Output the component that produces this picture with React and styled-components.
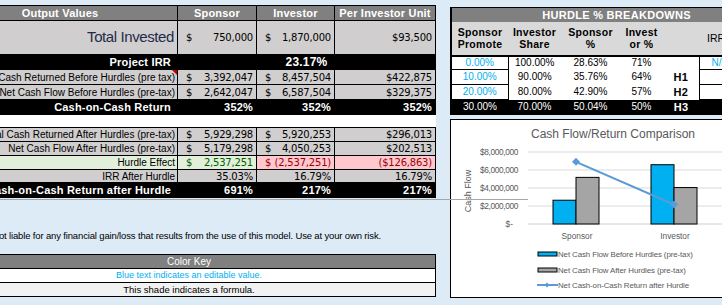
import React from 'react';
import styled, {createGlobalStyle} from 'styled-components';

const GlobalStyle = createGlobalStyle`
  html, body {
    margin: 0;
    padding: 0;
    background: #ddebf7;
    overflow: hidden;
  }
  body {
    width: 722px;
    height: 305px;
    font-family: "Liberation Sans", Arial, sans-serif;
  }
`

const tones = {
    head: {bg: '#808080', fg: '#fff'},
    gray: {bg: '#d0cece', fg: '#000'},
    black: {bg: '#000', fg: '#fff'},
    white: {bg: '#fff', fg: '#000'},
    green: {bg: '#e2efda', fg: '#006100'},
    pink: {bg: '#ffc7ce', fg: '#9c0006'},
    shade: {bg: '#f2f2f2', fg: '#000'},
    sub: {bg: '#d9d9d9', fg: '#000'},
}

const Page = styled.div`
    position: relative;
    display: grid;
    grid-template-columns: 493px 320px;
    column-gap: 15px;
    margin-left: -58px;
    padding-top: 5px;
    height: 300px;
`
const LeftCol = styled.div`
    display: flex;
    flex-direction: column;
`
const RightCol = styled.div`
    display: flex;
    flex-direction: column;
    padding-top: 2px;
`

const Sheet = styled.table`
    border-collapse: collapse;
    table-layout: fixed;
    width: ${p => p.$w}px;
    font-size: 10px;
`
const Col = styled.col`
    width: ${p => p.$w}px;
`
const Row = styled.tr`
    height: ${p => p.$h}px;
`
const Cell = styled.td`
    position: relative;
    padding: 0 ${p => p.$pr ?? 3}px 0 ${p => p.$pl ?? 3}px;
    line-height: 11px;
    text-align: ${p => p.$align || 'right'};
    white-space: nowrap;
    overflow: hidden;
    border: ${p => p.$open ? 'none' : '1px solid #000'};
    background: ${p => tones[p.$tone || 'gray'].bg};
    color: ${p => p.$ink || tones[p.$tone || 'gray'].fg};
    font-weight: ${p => p.$bold ? 700 : 400};
    font-size: ${p => p.$size || 10}px;
    letter-spacing: ${p => p.$bold ? '0.2px' : '0'};
`
const BigLabel = styled.span`
    font-size: 15px;
    letter-spacing: -0.4px;
    color: #1f2b4a;
`
const Money = styled.div`
    display: flex;
    justify-content: space-between;
    padding-left: 5px;
    font-family: "DejaVu Sans", sans-serif;
    font-size: 10px;
    letter-spacing: -0.2px;
`
const Num = styled.span`
    font-family: "DejaVu Sans", sans-serif;
    font-size: 10px;
    letter-spacing: -0.2px;
`
const CommentMark = styled.span`
    position: absolute;
    top: 0;
    right: 0;
    width: 0;
    height: 0;
    border-top: 5px solid #c00000;
    border-left: 5px solid transparent;
`

const Disclaimer = styled.div`
    margin-top: 31px;
    width: 439px;
    display: flex;
    justify-content: flex-end;
    white-space: nowrap;
    font-size: 9.5px;
    line-height: 14px;
    color: #000;
    letter-spacing: -0.15px;
`
const KeyTable = styled(Sheet)`
    margin-top: 11px;
    font-size: 9px;
`

const Hurdle = styled.table`
    border-collapse: collapse;
    table-layout: fixed;
    width: 330px;
    font-size: 10px;
    border-left: 2px solid #000;
`
const HCell = styled.td`
    padding: 0;
    line-height: 12px;
    text-align: ${p => p.$align || 'center'};
    padding-left: ${p => p.$pl || 0}px;
    white-space: nowrap;
    overflow: hidden;
    background: ${p => tones[p.$tone || 'white'].bg};
    color: ${p => p.$blue ? '#00b0f0' : tones[p.$tone || 'white'].fg};
    font-weight: ${p => p.$bold ? 700 : 400};
    font-size: ${p => p.$size || 10}px;
    border: ${p => p.$boxed ? '1px solid #000' : 'none'};
    border-bottom: ${p => p.$thick ? '2px solid #000' : p.$boxed ? '1px solid #000' : 'none'};
    border-top: ${p => p.$top ? '1px solid #000' : p.$boxed ? '1px solid #000' : 'none'};
    letter-spacing: ${p => p.$bold ? '0.3px' : '0'};
`

const ChartBox = styled.div`
    margin-top: 4px;
    height: 177px;
    background: #fff;
    border: 1px solid #000;
    border-right: none;
    overflow: hidden;
`
const HurdleLine = styled.div`
    position: absolute;
    left: 0;
    top: 199px;
    width: 586px;
    height: 1px;
    background: #a6a6a6;
    z-index: 2;
`

const bars = [
    {name: 'Sponsor', before: 2642047, after: 5179298, coc: 691, x: 103},
    {name: 'Investor', before: 6587504, after: 4050253, coc: 217, x: 201},
]
const base = 105
const perMillion = 9
const barH = v => (v / 1e6) * perMillion
const cocY = v => base - (v / 800) * 72
const font = 'Liberation Sans, sans-serif'

function Chart() {
    const ticks = [8, 6, 4, 2]
    const pts = bars.map(b => [b.x + 23, cocY(b.coc)])
    const diamond = (x, y, r) => `${x},${y - r} ${x + r},${y} ${x},${y + r} ${x - r},${y}`
    return (
        <svg width="320" height="177" viewBox="1 1 320 177">
            <text x="163" y="19" textAnchor="middle" fontSize="12" fill="#595959" fontFamily={font}>
                Cash Flow/Return Comparison
            </text>
            {ticks.map(t => (
                <g key={t}>
                    <line x1="78" x2="320" y1={base - t * perMillion} y2={base - t * perMillion} stroke="#d9d9d9"/>
                    <text x="68" y={base - t * perMillion + 3} textAnchor="end" fontSize="8.3" letterSpacing="-0.35"
                          fill="#595959" fontFamily={font}>${t},000,000</text>
                </g>
            ))}
            <line x1="78" x2="320" y1={base} y2={base} stroke="#d0d0d0"/>
            <text x="63" y={base + 3} textAnchor="end" fontSize="8.3" fill="#595959" fontFamily={font}>$-</text>
            <text transform="translate(21 72) rotate(-90)" textAnchor="middle" fontSize="9" fill="#595959"
                  fontFamily={font}>Cash Flow</text>
            {bars.map(b => (
                <g key={b.name}>
                    <rect x={b.x} y={base - barH(b.before)} width="23" height={barH(b.before)}
                          fill="#00b0f0" stroke="#000" strokeWidth="1"/>
                    <rect x={b.x + 23} y={base - barH(b.after)} width="23" height={barH(b.after)}
                          fill="#a5a5a5" stroke="#000" strokeWidth="1"/>
                    <text x={b.x + 24} y="120" textAnchor="middle" fontSize="8.3" fill="#595959"
                          fontFamily={font}>{b.name}</text>
                </g>
            ))}
            <polyline points={pts.map(p => p.join(',')).join(' ')} fill="none" stroke="#5b9bd5" strokeWidth="2"/>
            {pts.map(([x, y]) => <polygon key={x} points={diamond(x, y, 4)} fill="#5b9bd5"/>)}

            <rect x="88" y="133" width="19" height="4" fill="#00b0f0" stroke="#000"/>
            <text x="108" y="138" fontSize="7.9" letterSpacing="-0.1" fill="#595959" fontFamily={font}>Net Cash Flow Before Hurdles (pre-tax)</text>
            <rect x="88" y="149" width="19" height="4" fill="#a5a5a5" stroke="#000"/>
            <text x="108" y="154" fontSize="7.9" letterSpacing="-0.1" fill="#595959" fontFamily={font}>Net Cash Flow After Hurdles (pre-tax)</text>
            <line x1="87" x2="108" y1="166" y2="166" stroke="#5b9bd5" strokeWidth="2"/>
            <polygon points={diamond(97, 166, 2.5)} fill="#5b9bd5"/>
            <text x="108" y="169" fontSize="7.9" letterSpacing="-0.1" fill="#595959" fontFamily={font}>Net Cash-on-Cash Return after Hurdle</text>
        </svg>
    )
}

function M({v}) {
    return <Money><span>$</span><span>{v}</span></Money>
}

export default function App() {
    return (
        <>
            <GlobalStyle/>
            <Page>
                <LeftCol>
                    <Sheet $w={493}>
                        <colgroup>
                            <Col $w={235}/><Col $w={79}/><Col $w={78}/><Col $w={101}/>
                        </colgroup>
                        <tbody>
                        <Row $h={15}>
                            <Cell $tone="head" $bold $size={11} $align="center">Output Values</Cell>
                            <Cell $tone="head" $bold $size={11} $align="center">Sponsor</Cell>
                            <Cell $tone="head" $bold $size={11} $align="center">Investor</Cell>
                            <Cell $tone="head" $bold $size={11} $align="center">Per Investor Unit</Cell>
                        </Row>
                        <Row $h={34}>
                            <Cell $pr={3}><BigLabel>Total Invested</BigLabel></Cell>
                            <Cell><M v="750,000"/></Cell>
                            <Cell><M v="1,870,000"/></Cell>
                            <Cell><Num>$93,500</Num></Cell>
                        </Row>
                        <Row $h={15}>
                            <Cell $tone="black" $bold $size={11} $pr={6}>Project IRR</Cell>
                            <Cell $tone="black" $bold $size={12} $align="center" colSpan={3}>23.17%</Cell>
                        </Row>
                        <Row $h={15}>
                            <Cell $pr={2}>Total Cash Returned Before Hurdles (pre tax)<CommentMark/></Cell>
                            <Cell><M v="3,392,047"/></Cell>
                            <Cell><M v="8,457,504"/></Cell>
                            <Cell><Num>$422,875</Num></Cell>
                        </Row>
                        <Row $h={15}>
                            <Cell $pr={2}>Net Cash Flow Before Hurdles (pre-tax)</Cell>
                            <Cell><M v="2,642,047"/></Cell>
                            <Cell><M v="6,587,504"/></Cell>
                            <Cell><Num>$329,375</Num></Cell>
                        </Row>
                        <Row $h={15}>
                            <Cell $tone="black" $bold $size={11} $pr={6}>Cash-on-Cash Return</Cell>
                            <Cell $tone="black" $bold $size={11}>352%</Cell>
                            <Cell $tone="black" $bold $size={11}>352%</Cell>
                            <Cell $tone="black" $bold $size={11}>352%</Cell>
                        </Row>
                        <Row $h={13}>
                            <Cell $tone="white" $open colSpan={4}/>
                        </Row>
                        <Row $h={14}>
                            <Cell $pr={2}>Total Cash Returned After Hurdles (pre-tax)</Cell>
                            <Cell><M v="5,929,298"/></Cell>
                            <Cell><M v="5,920,253"/></Cell>
                            <Cell><Num>$296,013</Num></Cell>
                        </Row>
                        <Row $h={14}>
                            <Cell $pr={2}>Net Cash Flow After Hurdles (pre-tax)</Cell>
                            <Cell><M v="5,179,298"/></Cell>
                            <Cell><M v="4,050,253"/></Cell>
                            <Cell><Num>$202,513</Num></Cell>
                        </Row>
                        <Row $h={14}>
                            <Cell $tone="green" $ink="#000" $pr={2}>Hurdle Effect</Cell>
                            <Cell $tone="green"><M v="2,537,251"/></Cell>
                            <Cell $tone="pink"><M v="(2,537,251)"/></Cell>
                            <Cell $tone="pink"><Num>($126,863)</Num></Cell>
                        </Row>
                        <Row $h={13}>
                            <Cell $pr={2}>IRR After Hurdle</Cell>
                            <Cell><Num>35.03%</Num></Cell>
                            <Cell><Num>16.79%</Num></Cell>
                            <Cell><Num>16.79%</Num></Cell>
                        </Row>
                        <Row $h={15}>
                            <Cell $tone="black" $bold $size={11} $pr={6}>Net Cash-on-Cash Return after Hurdle</Cell>
                            <Cell $tone="black" $bold $size={11}>691%</Cell>
                            <Cell $tone="black" $bold $size={11}>217%</Cell>
                            <Cell $tone="black" $bold $size={11}>217%</Cell>
                        </Row>
                        </tbody>
                    </Sheet>

                    <Disclaimer>
                        <span>Disclaimer: the author is not liable for any financial gain/loss that results from the use of this model. Use at your own risk.</span>
                    </Disclaimer>

                    <KeyTable $w={494}>
                        <tbody>
                        <Row $h={14}>
                            <Cell $tone="head" $align="center" $size={10}>Color Key</Cell>
                        </Row>
                        <Row $h={14}>
                            <Cell $tone="white" $ink="#00b0f0" $align="center" $size={9}>Blue text indicates an editable value.</Cell>
                        </Row>
                        <Row $h={14}>
                            <Cell $tone="shade" $align="center" $size={9.5}>This shade indicates a formula.</Cell>
                        </Row>
                        </tbody>
                    </KeyTable>
                </LeftCol>

                <RightCol>
                    <Hurdle>
                        <colgroup>
                            <Col $w={57}/><Col $w={53}/><Col $w={59}/><Col $w={43}/><Col $w={36}/><Col $w={82}/>
                        </colgroup>
                        <tbody>
                        <Row $h={14}>
                            <HCell $tone="head" $bold $size={11} $top colSpan={6}>HURDLE % BREAKDOWNS</HCell>
                        </Row>
                        <Row $h={34}>
                            <HCell $tone="sub" $bold $size={10.5} $thick>Sponsor<br/>Promote</HCell>
                            <HCell $tone="sub" $bold $size={10.5} $thick>Investor<br/>Share</HCell>
                            <HCell $tone="sub" $bold $size={10.5} $thick>Sponsor<br/>%</HCell>
                            <HCell $tone="sub" $bold $size={10.5} $thick>Invest<br/>or %</HCell>
                            <HCell $tone="sub" $thick/>
                            <HCell $tone="sub" $align="left" $pl={8} $size={10.5} $thick>IRR Hurdle</HCell>
                        </Row>
                        <Row $h={14}>
                            <HCell $boxed $blue>0.00%</HCell>
                            <HCell>100.00%</HCell>
                            <HCell>28.63%</HCell>
                            <HCell>71%</HCell>
                            <HCell/>
                            <HCell $boxed $blue $align="left" $pl={12}>N/A</HCell>
                        </Row>
                        <Row $h={15}>
                            <HCell $boxed $blue>10.00%</HCell>
                            <HCell>90.00%</HCell>
                            <HCell>35.76%</HCell>
                            <HCell>64%</HCell>
                            <HCell $bold $size={11}>H1</HCell>
                            <HCell $boxed/>
                        </Row>
                        <Row $h={15}>
                            <HCell $boxed $blue>20.00%</HCell>
                            <HCell>80.00%</HCell>
                            <HCell>42.90%</HCell>
                            <HCell>57%</HCell>
                            <HCell $bold $size={11}>H2</HCell>
                            <HCell $boxed/>
                        </Row>
                        <Row $h={15}>
                            <HCell $tone="black">30.00%</HCell>
                            <HCell $tone="black">70.00%</HCell>
                            <HCell $tone="black">50.04%</HCell>
                            <HCell $tone="black">50%</HCell>
                            <HCell $tone="black" $bold $size={11}>H3</HCell>
                            <HCell $tone="black"/>
                        </Row>
                        </tbody>
                    </Hurdle>
                    <ChartBox>
                        <Chart/>
                    </ChartBox>
                </RightCol>
                <HurdleLine/>
            </Page>
        </>
    )
}
